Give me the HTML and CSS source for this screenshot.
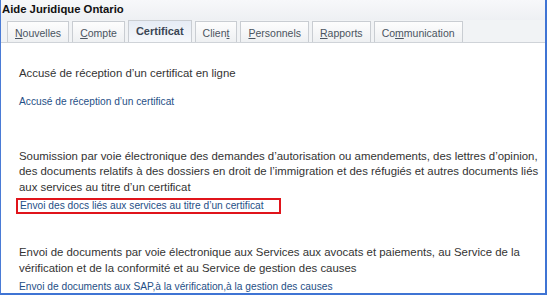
FILE: index.html
```html
<!doctype html>
<html lang="fr">
<head>
    <meta charset="UTF-8">
    <title>Aide Juridique Ontario</title>
    <link rel="stylesheet" href="styles.css">
</head>
<body>
<div class="frame">
    <div class="header">Aide Juridique Ontario</div>
    <div class="tabs">
        <a href="#" class="tab"><u>N</u>ouvelles</a>
        <a href="#" class="tab"><u>C</u>ompte</a>
        <a href="#" class="tab active">Certificat</a>
        <a href="#" class="tab">Clien<u>t</u></a>
        <a href="#" class="tab"><u>P</u>ersonnels</a>
        <a href="#" class="tab"><u>R</u>apports</a>
        <a href="#" class="tab">Co<u>m</u>munication</a>
    </div>
    <div class="content">
        <div class="section first">
            <p>Accusé de réception d’un certificat en ligne</p>
            <a href="#" class="link spaced">Accusé de réception d’un certificat</a>
        </div>
        <div class="section second">
            <p>Soumission par voie électronique des demandes d’autorisation ou amendements, des lettres d’opinion, des documents relatifs à des dossiers en droit de l’immigration et des réfugiés et autres documents liés aux services au titre d’un certificat</p>
            <a href="#" class="link boxed">Envoi des docs liés aux services au titre d’un certificat</a>
        </div>
        <div class="section third">
            <p>Envoi de documents par voie électronique aux Services aux avocats et paiements, au Service de la vérification et de la conformité et au Service de gestion des causes</p>
            <a href="#" class="link tight">Envoi de documents aux SAP,à la vérification,à la gestion des causes</a>
        </div>
    </div>
</div>
</body>
</html>
```

FILE: styles.css
```css
* {
    box-sizing: border-box;
}

body {
    margin: 0;
    font-family: "Liberation Sans", Arial, sans-serif;
    background: #fff;
}

.frame {
    width: 547px;
    height: 295px;
    border-left: 1px solid #4a7bd6;
    border-right: 2px solid #3f74d4;
    border-bottom: 2px solid #3f74d4;
    overflow: hidden;
}

.header {
    height: 20px;
    padding: 3px 0 0 1px;
    font-size: 11.3px;
    font-weight: bold;
    color: #111;
    background: linear-gradient(#f7f8fa, #eef0f3);
}

.tabs {
    display: flex;
    gap: 3px;
    height: 23px;
    padding-left: 6px;
    background: #f1f3f5;
    border-bottom: 1px solid #cfd3d8;
}

.tab {
    display: block;
    height: 21px;
    margin-top: 1px;
    padding: 5px 7px 0;
    font-size: 10.5px;
    color: #4a5460;
    text-decoration: none;
    background: linear-gradient(#fdfdfd, #eef0f2);
    border: 1px solid #c9cdd2;
    border-bottom: none;
}

.tab u {
    text-decoration: underline;
}

.tab.active {
    height: 22px;
    margin-top: 0;
    padding: 4px 7px 0;
    font-size: 11px;
    font-weight: bold;
    color: #3b4654;
    background: linear-gradient(#e6ecf5, #f6f8fb);
}

.content {
    padding: 0 0 0 18px;
}

.section p {
    margin: 0;
    font-size: 11.4px;
    line-height: 15.5px;
    color: #333;
}

.section.first {
    margin-top: 23px;
}

.section.second {
    margin-top: 40px;
}

.section.third {
    margin-top: 31px;
}

.link {
    display: inline-block;
    font-size: 10.2px;
    line-height: 14px;
    color: #1f4f86;
    text-decoration: none;
}

.link.spaced {
    margin-top: 13px;
}

.link.tight {
    margin-top: -1px;
    line-height: 12px;
}

.boxed {
    margin-left: -3px;
    padding: 0 2px;
    line-height: 12px;
    border: 2px solid #e0141b;
    width: 265px;
}
```
